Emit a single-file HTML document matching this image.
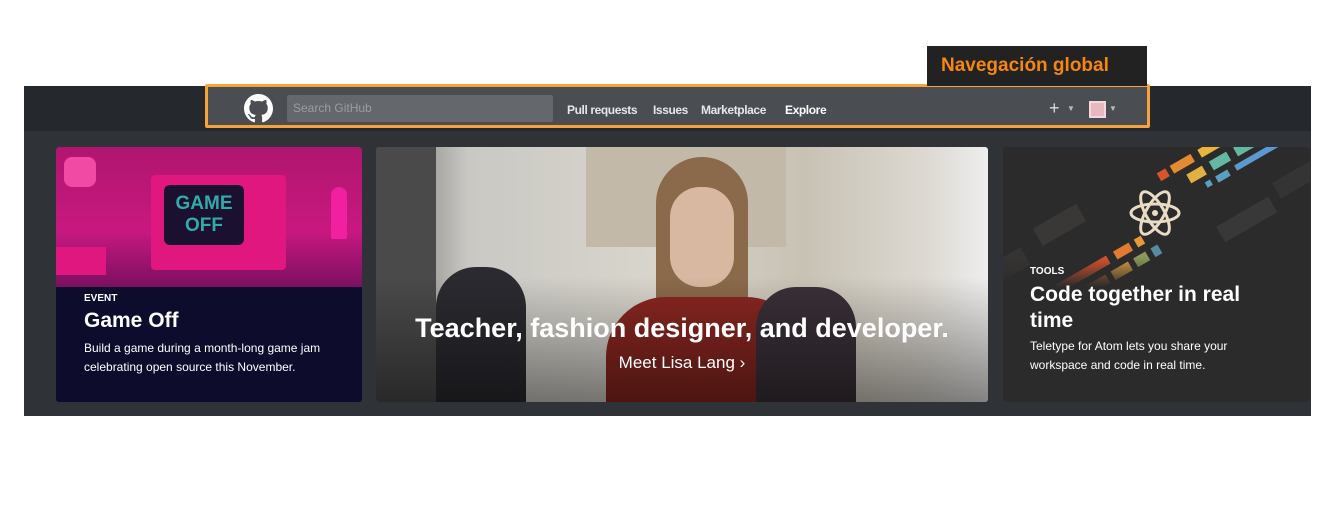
<!DOCTYPE html>
<html><head><meta charset="utf-8"><style>
*{margin:0;padding:0;box-sizing:border-box}
body{width:1340px;height:531px;background:#fff;position:relative;overflow:hidden;font-family:"Liberation Sans",sans-serif}
.abs{position:absolute}
.band{left:24px;top:86px;width:1287px;height:330px;background:#2f3337}
.nav{left:24px;top:86px;width:1287px;height:45px;background:#25292d}
.ob{left:205px;top:84px;width:945px;height:44px;border:3px solid #f6a33b;background:#4a4e53;border-radius:2px}
.label{left:927px;top:46px;width:220px;height:40px;background:#222;color:#f5870f;font-weight:bold;font-size:19px;line-height:40px;padding-left:14px}
.search{left:287px;top:95px;width:266px;height:27px;background:#64686c;border-radius:2px;color:#9a9ea2;font-size:12px;line-height:27px;padding-left:6px}
.nl{top:103px;color:#e5e7e9;font-size:12px;font-weight:bold;letter-spacing:-0.4px}
.card{top:147px;height:255px;border-radius:3px;overflow:hidden}
.c1{left:56px;width:306px;background:#0d0c2c}
.c2{left:376px;width:612px;background:linear-gradient(90deg,#6a6a68 0%,#c9c8c3 15%,#d8d5cc 45%,#c8c2b4 70%,#ddd9d2 90%,#eee 100%)}
.c3{left:1003px;width:307px;background:#2c2b2c}
.t{color:#fff}
</style></head><body>
<div class="abs band"></div>
<div class="abs nav"></div>
<div class="abs ob"></div>
<div class="abs label">Navegación global</div>
<svg class="abs" style="left:244px;top:94px" width="29" height="29" viewBox="0 0 16 16"><path fill="#fff" d="M8 0C3.58 0 0 3.58 0 8c0 3.540 2.29 6.53 5.47 7.59.4.07.55-.17.55-.38 0-.19-.01-.82-.01-1.490-2.01.37-2.530-.49-2.690-.94-.09-.23-.48-.94-.82-1.130-.28-.15-.68-.52-.01-.53.63-.01 1.080.58 1.230.82.72 1.210 1.870.87 2.330.66.07-.52.28-.87.51-1.070-1.780-.2-3.640-.89-3.640-3.950 0-.87.31-1.590.82-2.150-.08-.2-.36-1.020.08-2.120 0 0 .67-.21 2.200.82.64-.18 1.320-.27 2-.27.68 0 1.360.09 2 .27 1.530-1.040 2.200-.82 2.200-.82.44 1.100.16 1.920.08 2.120.51.56.82 1.270.82 2.150 0 3.070-1.870 3.750-3.650 3.950.29.25.54.73.54 1.480 0 1.070-.01 1.930-.01 2.200 0 .21.15.46.55.38A8.013 8.013 0 0016 8c0-4.420-3.580-8-8-8z"/></svg>
<div class="abs search">Search GitHub</div>
<div class="abs nl" style="left:567px">Pull requests</div>
<div class="abs nl" style="left:653px">Issues</div>
<div class="abs nl" style="left:701px">Marketplace</div>
<div class="abs nl" style="left:785px;color:#fff">Explore</div>
<div class="abs" style="left:1049px;top:98px;color:#ddd;font-size:18px">+</div>
<div class="abs" style="left:1067px;top:104px;color:#bbb;font-size:8px">▼</div>
<div class="abs" style="left:1089px;top:101px;width:17px;height:17px;background:#e8b8bf;border:2px solid #f4d8dc"></div>
<div class="abs" style="left:1109px;top:104px;color:#bbb;font-size:8px">▼</div>

<div class="abs card c1">
 <div class="abs" style="left:0;top:0;width:306px;height:140px;background:linear-gradient(180deg,#b0166f 0%,#c8187f 60%,#7a1060 100%)"></div>
 <div class="abs" style="left:95px;top:28px;width:135px;height:95px;background:#e0177f;border-radius:4px"></div>
 <div class="abs" style="left:108px;top:38px;width:80px;height:60px;background:#1c1030;border-radius:6px;color:#3aa;font-weight:bold;font-size:19px;text-align:center;line-height:22px;padding-top:8px">GAME<br>OFF</div>
 <div class="abs" style="left:8px;top:10px;width:32px;height:30px;background:#f04aa5;border-radius:8px"></div>
 <div class="abs" style="left:275px;top:40px;width:16px;height:52px;background:#f020a0;border-radius:8px 8px 2px 2px"></div>
 <div class="abs" style="left:0;top:100px;width:50px;height:28px;background:#e0177f"></div>
 <div class="abs t" style="left:28px;top:146px;font-size:10px;font-weight:bold">EVENT</div>
 <div class="abs t" style="left:28px;top:162px;font-size:21px;font-weight:bold">Game Off</div>
 <div class="abs t" style="left:28px;top:192px;font-size:12px;line-height:19px">Build a game during a month-long game jam<br>celebrating open source this November.</div>
</div>

<div class="abs card c2">
 <div class="abs" style="left:0;top:0;width:60px;height:255px;background:#4a4a4a"></div>
 <div class="abs" style="left:210px;top:0;width:200px;height:100px;background:#c3b9a8"></div>
 <div class="abs" style="left:280px;top:10px;width:92px;height:200px;background:#8a6a4a;border-radius:46px 46px 10px 10px"></div>
 <div class="abs" style="left:294px;top:40px;width:64px;height:100px;background:#d8b8a0;border-radius:30px"></div>
 <div class="abs" style="left:230px;top:150px;width:200px;height:110px;background:#8a2620;border-radius:60px 60px 0 0"></div>
 <div class="abs" style="left:60px;top:120px;width:90px;height:140px;background:#2a2a30;border-radius:40px 40px 0 0"></div>
 <div class="abs" style="left:380px;top:140px;width:100px;height:120px;background:#3a3038;border-radius:40px 40px 0 0"></div>
 <div class="abs" style="left:0;top:130px;width:612px;height:125px;background:linear-gradient(180deg,rgba(0,0,0,0),rgba(0,0,0,.45))"></div>
 <div class="abs t" style="left:0;width:612px;top:166px;text-align:center;font-size:27px;font-weight:bold">Teacher, fashion designer, and developer.</div>
 <div class="abs t" style="left:0;width:612px;top:206px;text-align:center;font-size:17px">Meet Lisa Lang ›</div>
</div>

<div class="abs card c3">
 <svg class="abs" style="left:0;top:0" width="307" height="140">
  <g transform="rotate(-30 150 70)">
   <rect x="-40" y="30" width="60" height="20" fill="#363432"/><rect x="40" y="20" width="50" height="20" fill="#3a3836"/><rect x="200" y="110" width="60" height="18" fill="#383838"/><rect x="270" y="100" width="50" height="18" fill="#343434"/>
   <rect x="-30" y="80" width="120" height="9" fill="#d9532b"/><rect x="98" y="80" width="18" height="9" fill="#e07b2f"/><rect x="122" y="80" width="8" height="9" fill="#e69b33"/>
   <rect x="-20" y="96" width="100" height="10" fill="#c86b2a"/><rect x="86" y="96" width="20" height="10" fill="#e0a040"/><rect x="112" y="96" width="14" height="10" fill="#8a9a5a"/><rect x="132" y="96" width="8" height="10" fill="#5a8aa0"/>
   <rect x="175" y="34" width="10" height="9" fill="#d9532b"/><rect x="190" y="34" width="24" height="9" fill="#e48a30"/><rect x="222" y="34" width="22" height="9" fill="#e9b53b"/><rect x="252" y="34" width="90" height="9" fill="#f0c040"/>
   <rect x="200" y="50" width="18" height="10" fill="#e0b040"/><rect x="226" y="50" width="20" height="10" fill="#62b8a0"/><rect x="254" y="50" width="90" height="10" fill="#62b8a0"/>
   <rect x="212" y="66" width="6" height="6" fill="#5aa0c0"/><rect x="224" y="66" width="14" height="7" fill="#5aa0c0"/><rect x="246" y="66" width="100" height="6" fill="#5a9ad0"/>
  </g>
  <g fill="none" stroke="#e9dcc4" stroke-width="3"><ellipse cx="152" cy="66" rx="24" ry="9"/><ellipse cx="152" cy="66" rx="24" ry="9" transform="rotate(60 152 66)"/><ellipse cx="152" cy="66" rx="24" ry="9" transform="rotate(-60 152 66)"/></g>
  <circle cx="152" cy="66" r="3" fill="#e9dcc4"/>
  <rect x="0" y="110" width="307" height="30" fill="url(#fd)"/>
  <defs><linearGradient id="fd" x1="0" y1="0" x2="0" y2="1"><stop offset="0" stop-color="#2c2b2c" stop-opacity="0"/><stop offset="1" stop-color="#2c2b2c"/></linearGradient></defs>
 </svg>
 <div class="abs t" style="left:27px;top:119px;font-size:10px;font-weight:bold">TOOLS</div>
 <div class="abs t" style="left:27px;top:135px;font-size:21px;font-weight:bold;line-height:26px">Code together in real<br>time</div>
 <div class="abs t" style="left:27px;top:190px;font-size:12px;line-height:19px">Teletype for Atom lets you share your<br>workspace and code in real time.</div>
</div>
</body></html>
